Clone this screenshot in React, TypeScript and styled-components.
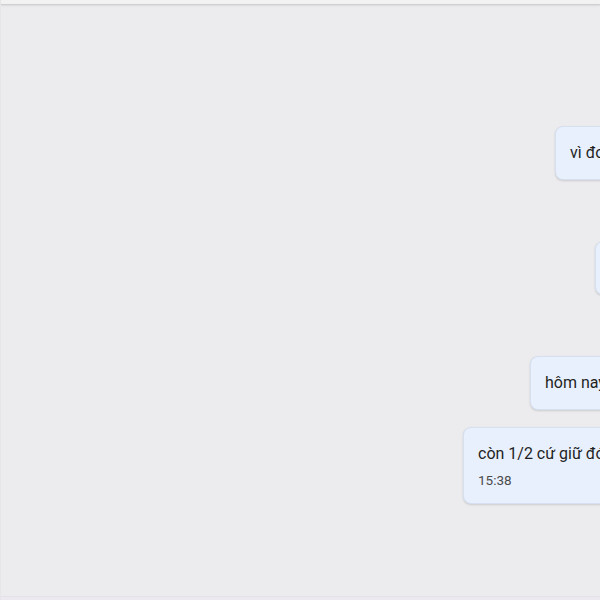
import React from 'react'
import styled, { createGlobalStyle } from 'styled-components'

const Global = createGlobalStyle`
  html, body {
    margin: 0;
    padding: 0;
    background: #ecebed;
    overflow: hidden;
  }
`

// the chat is wider than the window, so bubbles run past the right edge
const messages = [
  { id: 1, text: 'vì đoạn này mình chưa chốt được giá', gap: 0, left: 555 },
  { id: 2, text: 'ok để mình xem lại nhé', gap: 61, left: 595 },
  { id: 3, text: 'hôm nay bên kia báo lại rồi', gap: 61, left: 530 },
  { id: 4, text: 'còn 1/2 cứ giữ đó đã, mai tính tiếp', gap: 17, left: 463, time: '15:38' },
]

const App = () => {
  return (
    <Screen>
      <Global />
      <TopBar />
      <Pane>
        {messages.map((m) => (
          <Row key={m.id} $gap={m.gap} $left={m.left}>
            <Bubble>
              <Text>{m.text}</Text>
              {m.time && <Time>{m.time}</Time>}
            </Bubble>
          </Row>
        ))}
      </Pane>
      <Footer />
    </Screen>
  )
}

export default App

const Screen = styled.div`
  width: 600px;
  height: 600px;
  display: flex;
  flex-direction: column;
  overflow: hidden;
  background: #ecebed;
  border-left: 1px solid #e6e5e8;
  box-sizing: border-box;
  font-family: Roboto, "Noto Sans", "Liberation Sans", sans-serif;
`
const TopBar = styled.div`
  height: 4px;
  flex-shrink: 0;
  background: #f2f2f3;
  border-bottom: 1px solid #cfcfd1;
  box-shadow: 0 1px 2px rgba(0, 0, 0, 0.08);
`
const Pane = styled.div`
  flex: 1;
  display: flex;
  flex-direction: column;
  padding-top: 121px;
  overflow: hidden;
`
const Row = styled.div<{ $gap: number; $left: number }>`
  display: flex;
  margin-top: ${(p) => p.$gap}px;
  padding-left: ${(p) => p.$left - 1}px;
`
const Bubble = styled.div`
  flex-shrink: 0;
  box-sizing: border-box;
  padding: 14px 14px;
  background: #e8f0fd;
  border: 1px solid #d6e0f0;
  border-radius: 8px;
  box-shadow: 0 1px 2px rgba(60, 64, 67, 0.18);
  white-space: nowrap;
`
const Text = styled.div`
  font-size: 16px;
  line-height: 24px;
  color: #1f1f1f;
`
const Time = styled.div`
  margin-top: 5px;
  font-size: 13.5px;
  line-height: 18px;
  color: #4a4a4a;
`
const Footer = styled.div`
  height: 3px;
  flex-shrink: 0;
  border-top: 1px solid #e2e1e6;
  background: #eceaf0;
`
